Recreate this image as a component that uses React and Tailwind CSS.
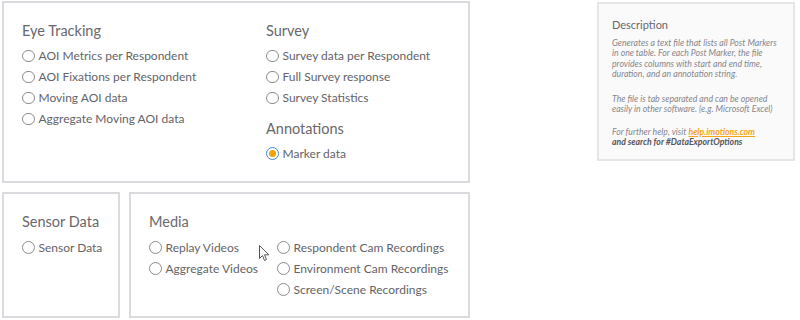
import React from 'react';

const font = { fontFamily: 'Lato, "Open Sans", sans-serif' };

const Radio = ({ label, checked }) => (
    <label className="flex items-center h-[21px] gap-[4px] text-[12px] text-[#646468] leading-none">
        <span
            className={
                checked
                    ? 'flex items-center justify-center w-[12.5px] h-[12.5px] rounded-full border border-[#3d8bd9] bg-white'
                    : 'w-[12.5px] h-[12.5px] rounded-full border border-[#8c8c8c] bg-white'
            }
        >
            {checked && <span className="w-[7px] h-[7px] rounded-full bg-[#f2a20c]" />}
        </span>
        <span className="whitespace-nowrap">{label}</span>
    </label>
);

const Heading = ({ children }) => (
    <h3 className="text-[14.5px] text-[#68686c] leading-none h-[22px] flex items-center">{children}</h3>
);

const Box = ({ className, children }) => (
    <div className={`border-2 border-[#dadbde] bg-white ${className}`}>{children}</div>
);

const App = () => {
    return (
        <div className="relative w-[800px] h-[320px] bg-white flex" style={font}>
            <div className="flex flex-col gap-[9px] pl-[2px] pt-[1px] w-[470px]">
                <Box className="w-[468px] h-[182px] flex pl-[18px] pt-[17.5px]">
                    <div className="w-[244px] flex flex-col">
                        <Heading>Eye Tracking</Heading>
                        <div className="mt-[3px] flex flex-col">
                            <Radio label="AOI Metrics per Respondent" />
                            <Radio label="AOI Fixations per Respondent" />
                            <Radio label="Moving AOI data" />
                            <Radio label="Aggregate Moving AOI data" />
                        </div>
                    </div>
                    <div className="flex flex-col">
                        <Heading>Survey</Heading>
                        <div className="mt-[3px] flex flex-col">
                            <Radio label="Survey data per Respondent" />
                            <Radio label="Full Survey response" />
                            <Radio label="Survey Statistics" />
                        </div>
                        <div className="mt-[9.5px]">
                            <Heading>Annotations</Heading>
                        </div>
                        <div className="mt-[3px]">
                            <Radio label="Marker data" checked />
                        </div>
                    </div>
                </Box>
                <div className="flex gap-[9px]">
                    <Box className="w-[118px] h-[126px] pl-[18px] pt-[17px]">
                        <Heading>Sensor Data</Heading>
                        <div className="mt-[4px]">
                            <Radio label="Sensor Data" />
                        </div>
                    </Box>
                    <Box className="w-[341px] h-[126px] pl-[18px] pt-[17px]">
                        <Heading>Media</Heading>
                        <div className="mt-[4px] flex">
                            <div className="w-[128px] flex flex-col">
                                <Radio label="Replay Videos" />
                                <Radio label="Aggregate Videos" />
                            </div>
                            <div className="flex flex-col">
                                <Radio label="Respondent Cam Recordings" />
                                <Radio label="Environment Cam Recordings" />
                                <Radio label="Screen/Scene Recordings" />
                            </div>
                        </div>
                    </Box>
                </div>
            </div>

            <div className="ml-[127px] mt-[2px] w-[198px] h-[159px] border-2 border-[#e6e6e8] bg-[#fafafa] pl-[13px] pr-[8px] pt-[15px]">
                <h4 className="text-[11px] text-[#68686c] leading-none h-[14px]">Description</h4>
                <div className="mt-[5px] text-[8.7px] italic leading-[10.3px] text-[#86868c]">
                    <p>
                        Generates a text file that lists all Post Markers in one table. For each Post Marker, the file
                        provides columns with start and end time, duration, and an annotation string.
                    </p>
                    <p className="mt-[14.5px]">
                        The file is tab separated and can be opened easily in other software. (e.g. Microsoft Excel)
                    </p>
                    <p className="mt-[12.5px]">
                        For further help, visit{' '}
                        <span className="font-bold text-[#f5a418] underline">help.imotions.com</span>
                        <br />
                        <span className="font-bold text-[#55555a]">and search for #DataExportOptions</span>
                    </p>
                </div>
            </div>

            <svg
                className="absolute left-[259px] top-[245px]"
                width="11"
                height="17"
                viewBox="0 0 11 17"
            >
                <path
                    d="M0.5 0.5 L0.5 13.5 L3.5 10.5 L5.5 15.5 L7.5 14.5 L5.5 9.8 L9.8 9.8 Z"
                    fill="#ffffff"
                    stroke="#555"
                    strokeWidth="1"
                    strokeLinejoin="round"
                />
            </svg>
        </div>
    );
};

export default App;
